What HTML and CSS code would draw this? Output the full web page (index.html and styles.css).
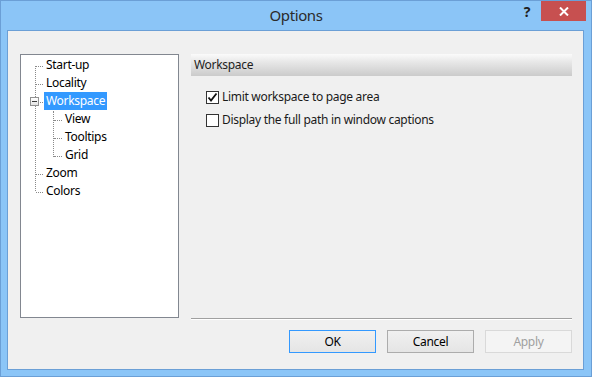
FILE: index.html
```html
<!DOCTYPE html>
<html lang="en">
<head>
    <meta charset="UTF-8">
    <meta name="viewport" content="width=device-width, initial-scale=1.0">
    <title>Options</title>
    <link rel="stylesheet" href="styles.css">
</head>
<body>
    <div class="window">
        <div class="titlebar">
            <span class="title">Options</span>
            <div class="window-buttons">
                <span class="help-button">?</span>
                <span class="close-button">
                    <svg width="10" height="9" viewBox="0 0 10 9">
                        <path d="M1 0.5 L9 8.5 M9 0.5 L1 8.5" stroke="#fff" stroke-width="2" fill="none"/>
                    </svg>
                </span>
            </div>
        </div>

        <div class="client">
            <div class="tree">
                <ul class="tree-root">
                    <li><div class="row"><span class="label">Start-up</span></div></li>
                    <li><div class="row"><span class="label">Locality</span></div></li>
                    <li>
                        <div class="row"><span class="expander"></span><span class="label selected">Workspace</span></div>
                        <ul class="tree-children">
                            <li><div class="row"><span class="label">View</span></div></li>
                            <li><div class="row"><span class="label">Tooltips</span></div></li>
                            <li><div class="row"><span class="label">Grid</span></div></li>
                        </ul>
                    </li>
                    <li><div class="row"><span class="label">Zoom</span></div></li>
                    <li><div class="row"><span class="label">Colors</span></div></li>
                </ul>
            </div>

            <div class="panel">
                <div class="panel-heading">Workspace</div>
                <div class="options">
                    <label class="option">
                        <span class="check">
                            <svg width="11" height="11" viewBox="0 0 11 11">
                                <path d="M1.5 5.5 L4 8.5 L9.5 1.5" stroke="#111" stroke-width="1.8" fill="none"/>
                            </svg>
                        </span>
                        Limit workspace to page area
                    </label>
                    <label class="option">
                        <span class="check"></span>
                        Display the full path in window captions
                    </label>
                </div>
                <div class="separator"></div>
            </div>

            <div class="buttons">
                <button class="dialog-button default-button">OK</button>
                <button class="dialog-button">Cancel</button>
                <button class="dialog-button" disabled>Apply</button>
            </div>
        </div>
    </div>
</body>
</html>
```

FILE: styles.css
```css
body {
    margin: 0;
    font-family: "Noto Sans", "Open Sans", sans-serif;
    font-size: 12px;
    letter-spacing: -0.3px;
    color: #000;
}

.window {
    width: 592px;
    height: 377px;
    box-sizing: border-box;
    border: 1px solid #6b9fd6;
    background-color: #8bc5f7;
    display: flex;
    flex-direction: column;
}

/* title bar */

.titlebar {
    height: 29px;
    flex-shrink: 0;
    display: grid;
    grid-template-columns: 1fr auto 1fr;
    align-items: start;
}

.title {
    grid-column: 2;
    font-size: 15px;
    letter-spacing: -0.4px;
    line-height: 29px;
    color: #2b2b2b;
}

.window-buttons {
    grid-column: 3;
    justify-self: end;
    display: flex;
    margin-right: 5px;
}

.help-button {
    width: 28px;
    height: 20px;
    text-align: center;
    font-size: 14px;
    font-weight: 700;
    line-height: 22px;
    color: #1f1f1f;
}

.close-button {
    width: 45px;
    height: 20px;
    background-color: #c75050;
    display: flex;
    align-items: center;
    justify-content: center;
}

/* client area */

.client {
    flex: 1;
    margin: 0 7px 6px 6px;
    border: 1px solid #6b9fd6;
    background-color: #f0f0f0;
    padding: 23px 11px 16px 12px;
    display: grid;
    grid-template-columns: 159px 381px;
    grid-template-rows: 266px 23px;
    column-gap: 12px;
    row-gap: 10px;
}

/* tree */

.tree {
    grid-row: 1;
    height: 264px;
    box-sizing: border-box;
    border: 1px solid #828790;
    background-color: #fff;
}

.tree ul {
    list-style: none;
    margin: 0;
    padding: 0;
    position: relative;
}

.tree-root {
    padding-top: 1px !important;
}

.tree-root::before {
    content: "";
    position: absolute;
    left: 14px;
    top: 11px;
    bottom: 9px;
    border-left: 1px dotted #8a8a8a;
}

.tree-children::before {
    content: "";
    position: absolute;
    left: 32px;
    top: 1px;
    height: 46px;
    border-left: 1px dotted #8a8a8a;
}

.row {
    position: relative;
    height: 18px;
    line-height: 18px;
    padding-left: 23px;
}

.row::before {
    content: "";
    position: absolute;
    left: 15px;
    top: 10px;
    width: 7px;
    border-top: 1px dotted #8a8a8a;
}

.tree-children .row {
    padding-left: 42px;
}

.tree-children .row::before {
    left: 33px;
    width: 8px;
}

.label {
    display: inline-block;
    padding: 0 2px;
    white-space: nowrap;
}

.label.selected {
    background-color: #3399ff;
    color: #fff;
}

.expander {
    position: absolute;
    left: 9px;
    top: 5px;
    width: 9px;
    height: 9px;
    box-sizing: border-box;
    border: 1px solid #919191;
    background: linear-gradient(#fff, #e4e4e4);
    z-index: 1;
}

.expander::after {
    content: "";
    position: absolute;
    left: 1px;
    top: 3px;
    width: 5px;
    height: 1px;
    background-color: #3a3a3a;
}

/* right panel */

.panel {
    display: flex;
    flex-direction: column;
}

.panel-heading {
    height: 22px;
    line-height: 21px;
    padding-left: 3px;
    color: #1e1e1e;
    background: linear-gradient(#fbfbfb 0%, #e8e8e8 35%, #cbcbcb 100%);
}

.options {
    margin-top: 12px;
    padding-left: 15px;
    display: flex;
    flex-direction: column;
    gap: 5px;
}

.option {
    height: 18px;
    line-height: 18px;
    display: flex;
    align-items: center;
    gap: 3px;
    color: #1a1a1a;
}

.check {
    width: 13px;
    height: 13px;
    box-sizing: border-box;
    border: 1px solid #333;
    background-color: #fff;
    display: flex;
    align-items: center;
    justify-content: center;
}

.separator {
    margin-top: auto;
    border-top: 1px solid #a0a0a0;
    border-bottom: 1px solid #fff;
}

/* buttons */

.buttons {
    grid-column: 2;
    grid-row: 2;
    display: flex;
    justify-content: flex-end;
    gap: 11px;
}

.dialog-button {
    width: 87px;
    height: 23px;
    padding: 0;
    border: 1px solid #acacac;
    background: linear-gradient(#f0f0f0, #e5e5e5);
    font-family: "Noto Sans", "Open Sans", sans-serif;
    font-size: 12px;
    letter-spacing: -0.3px;
    color: #000;
}

.default-button {
    border-color: #3399ff;
}

.dialog-button:disabled {
    border-color: #d9d9d9;
    background: #f4f4f4;
    color: #a0a0a0;
}
```
